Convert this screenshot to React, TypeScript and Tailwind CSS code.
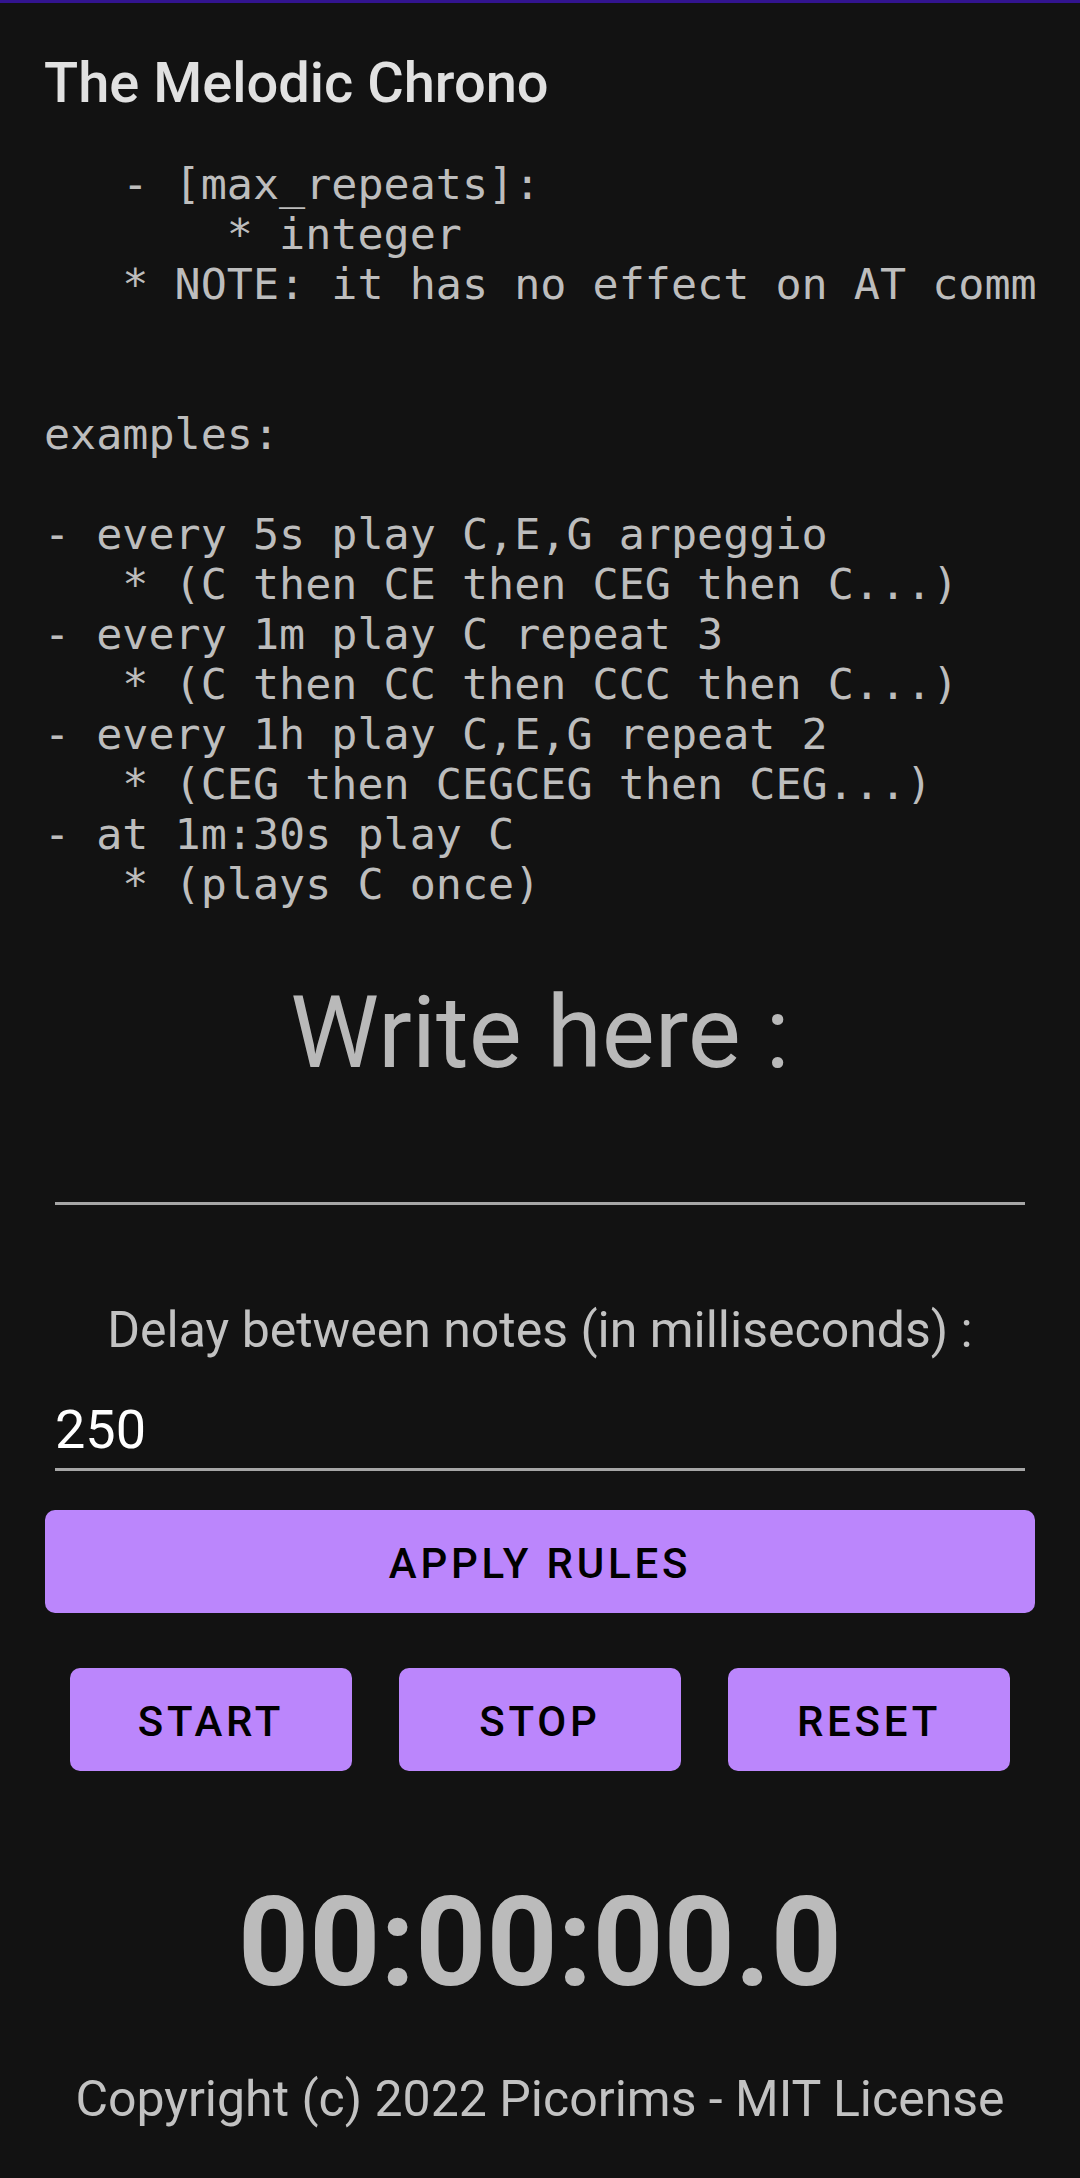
import React from 'react';

const helpLines = [
  '   - [max_repeats]:',
  '       * integer',
  '   * NOTE: it has no effect on AT comm',
  '',
  '',
  'examples:',
  '',
  '- every 5s play C,E,G arpeggio',
  '   * (C then CE then CEG then C...)',
  '- every 1m play C repeat 3',
  '   * (C then CC then CCC then C...)',
  '- every 1h play C,E,G repeat 2',
  '   * (CEG then CEGCEG then CEG...)',
  '- at 1m:30s play C',
  '   * (plays C once)',
];

const sans = "font-['Roboto','Noto_Sans',sans-serif]";

const Btn: React.FC<{ label: string; className?: string }> = ({ label, className }) => (
  <button
    className={`h-[103px] rounded-[10px] bg-[#bb86fc] text-black font-medium text-[42px] tracking-[0.09em] uppercase flex items-center justify-center pt-[3px] ${className ?? ''}`}
  >
    {label}
  </button>
);

const App: React.FC = () => {
  return (
    <div className={`min-h-[2178px] bg-[#121212] ${sans}`}>
      <div className="h-[3px] bg-[#32148f]" />

      <h1 className="mt-[48px] px-[44px] text-[56px] leading-[64px] font-medium text-[#e1e1e1]">
        The Melodic Chrono
      </h1>

      <div className="mt-[44px] px-[44px]">
        <pre className="overflow-hidden font-['DejaVu_Sans_Mono',monospace] text-[43.4px] leading-[50px] text-[#bdbdbd] whitespace-pre">
          {helpLines.join('\n')}
        </pre>
      </div>

      <div className="mt-[64px] text-center text-[100px] leading-[120px] text-[#b9b9b9]">Write here :</div>
      <div className="mt-[109px] mx-[55px] h-[3px] bg-[#a6a6a6]" />

      <div className="mt-[96px] text-center text-[50px] leading-[58px] text-[#c2c2c2]">
        Delay between notes (in milliseconds) :
      </div>
      <div className="mt-[39px] mx-[55px] text-[54px] leading-[64px] text-white">250</div>
      <div className="mt-[6px] mx-[55px] h-[3px] bg-[#a6a6a6]" />

      <div className="mt-[39px] px-[45px]">
        <Btn label="Apply rules" className="w-full" />
      </div>

      <div className="mt-[55px] flex justify-center gap-[47px]">
        <Btn label="Start" className="w-[282px]" />
        <Btn label="Stop" className="w-[282px]" />
        <Btn label="Reset" className="w-[282px]" />
      </div>

      <div className="mt-[97px] text-center text-[124px] leading-[150px] font-bold text-[#bbbbbb]">00:00:00.0</div>

      <div className="mt-[52px] text-center text-[50px] leading-[58px] text-[#c2c2c2]">
        Copyright (c) 2022 Picorims - MIT License
      </div>
    </div>
  );
};

export default App;
